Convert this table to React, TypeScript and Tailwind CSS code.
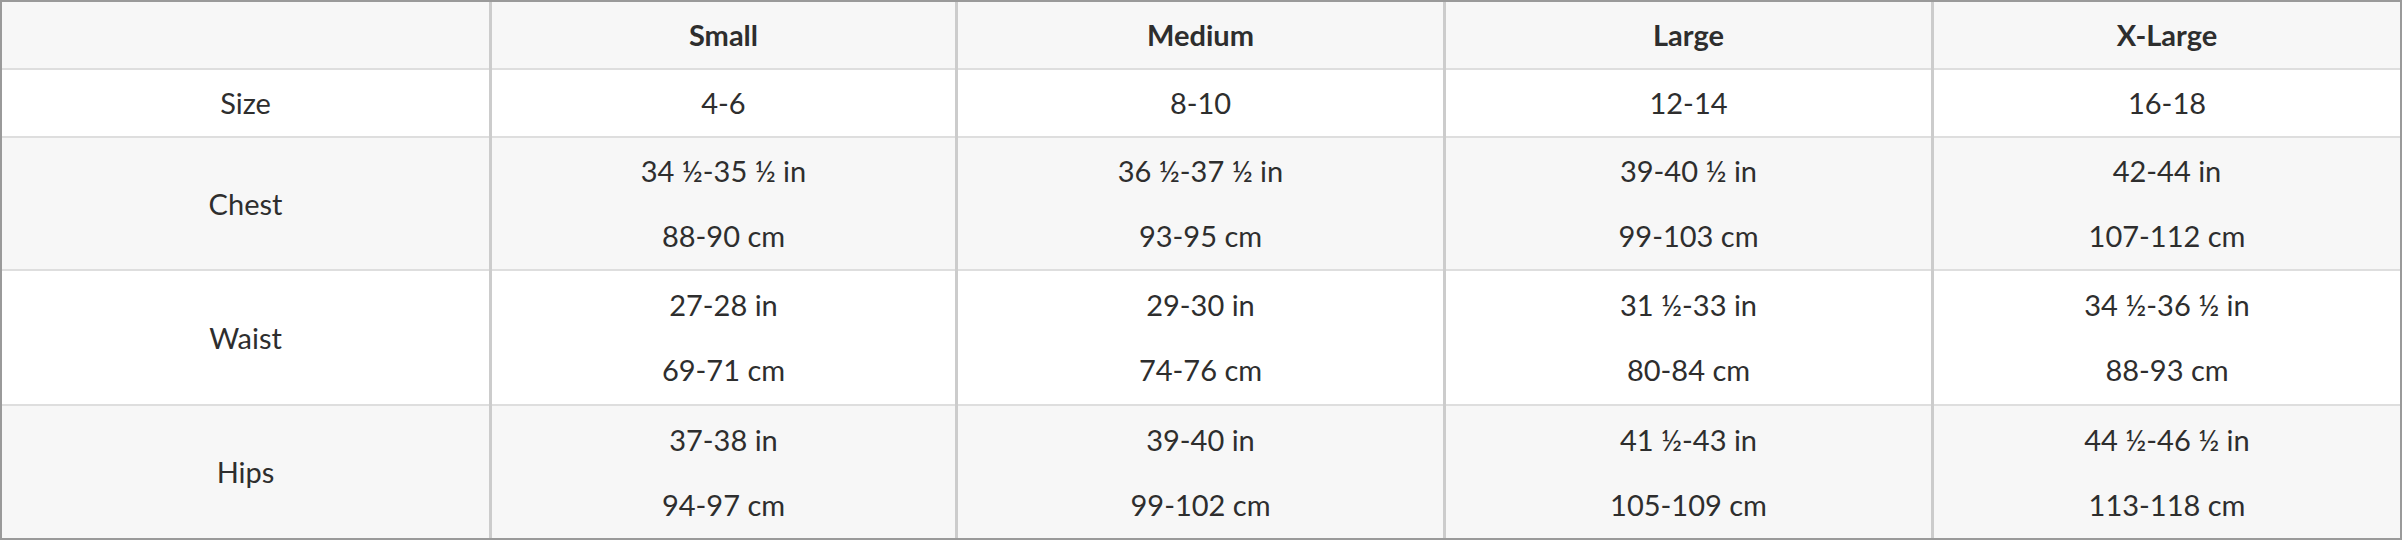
import React from "react";

const columns: { label: string; w: string; cells: string[][] }[] = [
  { label: "", w: "w-[487px]", cells: [["Size"], ["Chest"], ["Waist"], ["Hips"]] },
  {
    label: "Small",
    w: "w-[466px]",
    cells: [["4-6"], ["34 ½-35 ½ in", "88-90 cm"], ["27-28 in", "69-71 cm"], ["37-38 in", "94-97 cm"]],
  },
  {
    label: "Medium",
    w: "w-[488px]",
    cells: [["8-10"], ["36 ½-37 ½ in", "93-95 cm"], ["29-30 in", "74-76 cm"], ["39-40 in", "99-102 cm"]],
  },
  {
    label: "Large",
    w: "w-[488px]",
    cells: [["12-14"], ["39-40 ½ in", "99-103 cm"], ["31 ½-33 in", "80-84 cm"], ["41 ½-43 in", "105-109 cm"]],
  },
  {
    label: "X-Large",
    w: "flex-1",
    cells: [["16-18"], ["42-44 in", "107-112 cm"], ["34 ½-36 ½ in", "88-93 cm"], ["44 ½-46 ½ in", "113-118 cm"]],
  },
];

const rowBg = ["bg-white", "bg-[#f7f7f7]", "bg-white", "bg-[#f7f7f7]"];
const rowH = ["h-[68px]", "h-[133px]", "h-[135px]", "h-[134px]"];

export default function App() {
  return (
    <div
      className="w-[2402px] h-[540px] border-2 border-[#9a9a9a] flex text-[#2e2e2e] text-[29px]"
      style={{ fontFamily: "Lato, 'Open Sans', sans-serif" }}
    >
      {columns.map((col, ci) => (
        <div
          key={ci}
          className={`${col.w} flex flex-col ${ci > 0 ? "border-l-[3px] border-[#cccccc]" : ""}`}
        >
          <div className="h-[66px] bg-[#f7f7f7] flex items-center justify-center font-bold">
            {col.label}
          </div>
          {col.cells.map((lines, ri) => (
            <div
              key={ri}
              className={`${rowH[ri]} ${rowBg[ri]} border-t-2 border-[#dedede] flex flex-col justify-center items-center`}
            >
              {lines.map((l, li) => (
                <div key={li} className="h-[65px] flex items-center justify-center">
                  {l}
                </div>
              ))}
            </div>
          ))}
        </div>
      ))}
    </div>
  );
}
